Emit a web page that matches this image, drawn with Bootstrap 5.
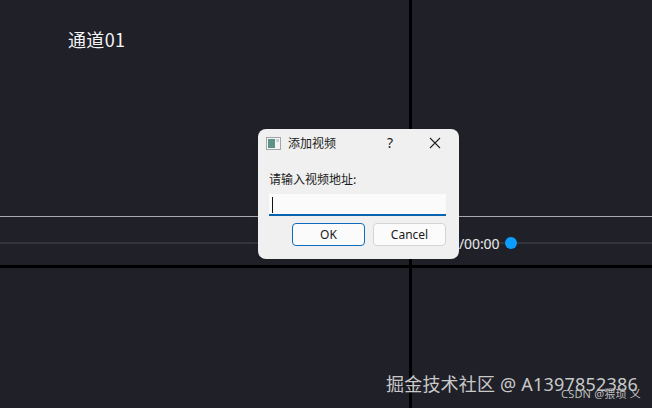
<!DOCTYPE html>
<html lang="zh">
<head>
<meta charset="utf-8">
<title>添加视频</title>
<link href="https://cdn.jsdelivr.net/npm/bootstrap@5.3.0/dist/css/bootstrap.min.css" rel="stylesheet">
<style>
html, body { margin: 0; width: 652px; height: 408px; overflow: hidden; background: #000; }
body { font-family: "Liberation Sans", "Noto Sans CJK SC", sans-serif; }
.stage { position: relative; width: 652px; height: 408px; display: grid; grid-template-columns: 409px 240px; grid-template-rows: 265px 140px; column-gap: 3px; row-gap: 3px; }
.pane { background: #1f2028; }
.chan { position: absolute; left: 68px; top: 28px; font-size: 18px; line-height: 22px; letter-spacing: .35px; color: #f4f4f4; font-family: "Noto Sans CJK SC", sans-serif; }
.line-w { position: absolute; left: 0; right: 0; top: 216px; height: 1px; background: #a9a9ad; }
.line-g { position: absolute; left: 0; right: 0; top: 242px; height: 2px; background: #33343a; }
.timer { position: absolute; left: 459px; top: 235px; font-size: 14px; line-height: 18px; letter-spacing: -.1px; color: #e9e9e9; font-family: "Noto Sans", sans-serif; }
.knob { position: absolute; left: 505px; top: 237px; width: 12px; height: 12px; border-radius: 50%; background: #0c9dff; }
.dlg { position: absolute; left: 258px; top: 129px; width: 201px; height: 130px; background: #f0f0f0; border-radius: 8px; color: #1a1a1a; font-size: 12px; font-family: "Noto Sans CJK SC", sans-serif; }
.dlg-title { height: 28px; padding-left: 8px; }
.dlg-title .cap { margin-left: 7px; font-size: 12px; line-height: 16px; }
.qm { position: absolute; left: 129px; top: 5px; font-size: 14px; line-height: 18px; font-family: "Noto Sans", sans-serif; }
.xbtn { position: absolute; left: 171px; top: 8px; }
.dlg-body { padding: 14px 11px 0 11px; }
.lbl { line-height: 16px; margin-left: 0; }
.inp { height: 22px; width: 177px; margin-top: 7px; background: #fbfbfb; border-bottom: 2px solid #0a64ad; padding: 3px 0 0 3px; }
.caret-bar { display: block; width: 1px; height: 16px; background: #111; }
.btns { margin-top: 7px; padding-left: 23px; gap: 8px; }
.wbtn { width: 73px; height: 23px; padding: 0; font-size: 12px; line-height: 20px; color: #1a1a1a; background: #fbfbfb; border: 1px solid #d4d4d4; border-radius: 4px; font-family: "Noto Sans", sans-serif; }
.wbtn-ok { border-color: #0f6cbd; }
.mark-jj { position: absolute; left: 386px; top: 372px; font-size: 18px; line-height: 24px; letter-spacing: .2px; color: #c9c9c9; white-space: nowrap; font-family: "Noto Sans", "Noto Sans CJK SC", sans-serif; }
.mark-csdn { position: absolute; left: 561px; top: 386px; font-size: 11px; line-height: 15px; letter-spacing: .2px; color: #bdbdbd; white-space: nowrap; font-family: "Noto Sans", "Noto Sans CJK SC", sans-serif; }
</style>
</head>
<body>
<div class="stage">
  <div class="pane"></div>
  <div class="pane"></div>
  <div class="pane"></div>
  <div class="pane"></div>
  <div class="chan">通道01</div>
  <div class="line-w"></div>
  <div class="line-g"></div>
  <div class="timer">/00:00</div>
  <div class="knob"></div>
  <div class="mark-jj">掘金技术社区 @ A1397852386</div>
  <div class="mark-csdn">CSDN @猥琐 义</div>
  <div class="dlg shadow-sm">
    <div class="dlg-title d-flex align-items-center">
      <svg width="15" height="13" viewBox="0 0 15 13"><rect x="0.5" y="0.5" width="14" height="12" fill="#f4f4f4" stroke="#a5a5a5"/><rect x="2" y="2" width="7" height="9" fill="#5f9389"/><rect x="10" y="2" width="3" height="3" fill="#c7d4d2"/></svg>
      <span class="cap">添加视频</span>
      <span class="qm">?</span>
      <svg class="xbtn" width="12" height="12" viewBox="0 0 12 12"><path d="M1 1L11 11M11 1L1 11" stroke="#222" stroke-width="1.1" fill="none"/></svg>
    </div>
    <div class="dlg-body">
      <div class="lbl">请输入视频地址:</div>
      <div class="inp"><span class="caret-bar"></span></div>
      <div class="btns d-flex">
        <button type="button" class="btn wbtn wbtn-ok">OK</button>
        <button type="button" class="btn wbtn">Cancel</button>
      </div>
    </div>
  </div>
</div>
</body>
</html>
